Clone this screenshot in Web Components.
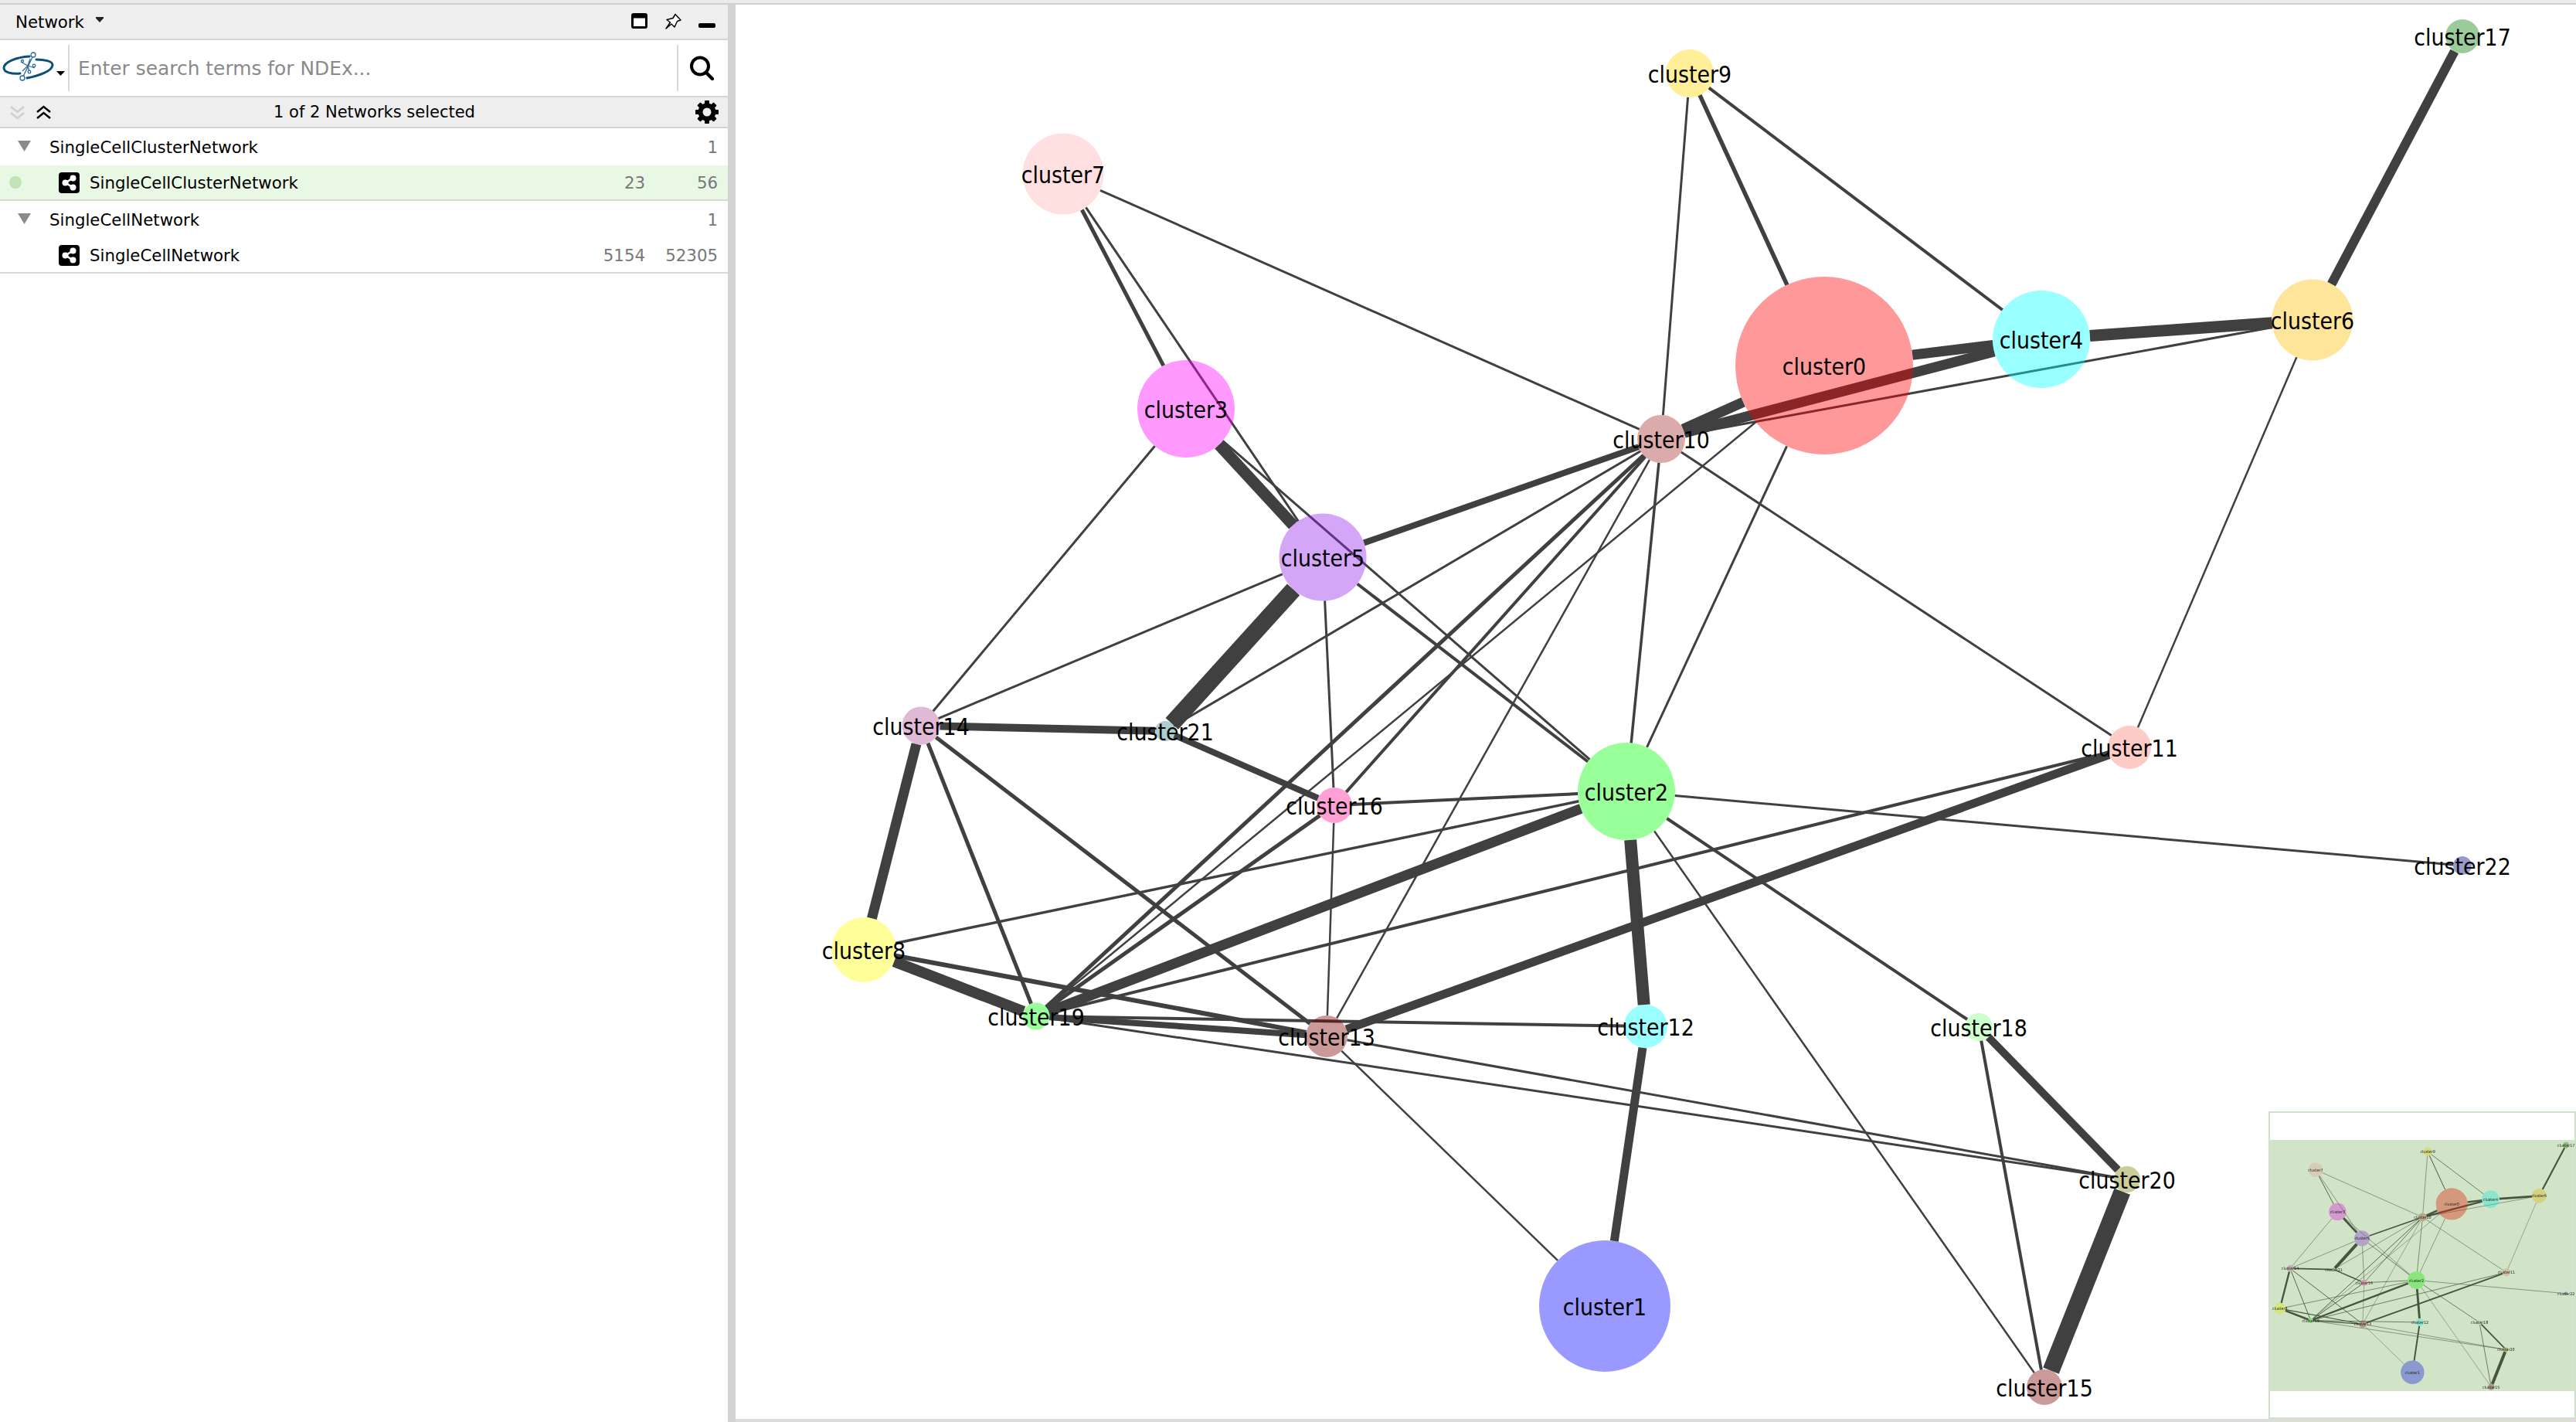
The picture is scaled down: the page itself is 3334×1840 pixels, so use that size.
<!DOCTYPE html>
<html>
<head>
<meta charset="utf-8">
<title>Network</title>
<style>
  html, body { margin: 0; padding: 0; background: #fff; overflow: hidden; }
  body { font-family: "DejaVu Sans", sans-serif; }
</style>
</head>
<body>
<cy-app>
  <network-panel slot="left">
    <panel-header>Network</panel-header>
    <search-bar>Enter search terms for NDEx...</search-bar>
    <selection-bar>1 of 2 Networks selected</selection-bar>
    <collection-row count="1">SingleCellClusterNetwork</collection-row>
    <network-row nodes="23" edges="56" selected>SingleCellClusterNetwork</network-row>
    <collection-row count="1">SingleCellNetwork</collection-row>
    <network-row nodes="5154" edges="52305">SingleCellNetwork</network-row>
  </network-panel>
  <network-canvas slot="right">
    <network-minimap></network-minimap>
  </network-canvas>
</cy-app>

<script>
// colours are the saturated ones, every node is painted at 0.4 opacity over the edges
const NODES = [
  [0, 2361, 473, 115, [255, 0, 0]],
  [1, 2077, 1690, 85, [0, 0, 255]],
  [2, 2105, 1024, 63, [0, 255, 0]],
  [3, 1535, 529, 63, [255, 0, 255]],
  [4, 2642, 439, 63, [0, 255, 255]],
  [5, 1712, 721, 56.5, [147, 32, 237]],
  [6, 2993, 414, 52.5, [255, 191, 0]],
  [7, 1376, 225, 52.5, [255, 175, 175]],
  [8, 1118, 1229, 42, [255, 255, 0]],
  [9, 2187, 95, 31, [255, 215, 0]],
  [10, 2150, 568, 31, [165, 42, 42]],
  [11, 2756, 967, 28, [250, 128, 114]],
  [12, 2130, 1328, 28, [0, 255, 255]],
  [13, 1717, 1341, 27, [128, 0, 0]],
  [14, 1192, 939, 24.5, [178, 79, 152]],
  [15, 2646, 1795, 23, [128, 0, 0]],
  [16, 1727, 1042, 23, [255, 20, 147]],
  [17, 3187, 47, 22, [0, 128, 0]],
  [18, 2561, 1329, 18, [128, 255, 128]],
  [19, 1341, 1315, 17.5, [0, 255, 0]],
  [20, 2753, 1526, 17, [128, 128, 0]],
  [21, 1508, 946, 13, [47, 133, 133]],
  [22, 3187, 1120, 12, [0, 0, 128]],
];

const EDGES = [
  [17, 6, 12], [9, 10, 3], [9, 0, 5.5], [9, 4, 4], [7, 10, 3], [7, 3, 5], [7, 5, 3],
  [3, 5, 15], [3, 14, 3], [3, 2, 3], [5, 21, 22], [5, 14, 3], [5, 16, 3], [5, 10, 8],
  [5, 2, 4], [10, 0, 13], [10, 4, 13], [10, 6, 3], [0, 4, 13], [4, 6, 15], [6, 11, 2.5],
  [10, 11, 3], [10, 2, 3.5], [0, 2, 3], [10, 21, 3], [0, 19, 2.5], [10, 19, 5], [10, 16, 4],
  [10, 13, 2.5], [16, 19, 5], [21, 14, 10], [21, 16, 8], [14, 8, 13], [14, 19, 5], [14, 13, 5],
  [8, 19, 14], [8, 13, 6], [8, 2, 3.5], [19, 12, 4], [19, 13, 8], [19, 20, 3], [13, 20, 3],
  [2, 19, 13], [19, 11, 4], [13, 11, 11], [13, 16, 2.5], [13, 1, 2.5], [2, 16, 4], [2, 22, 3],
  [2, 12, 16], [2, 18, 4], [2, 15, 2.5], [12, 1, 11], [18, 20, 10], [18, 15, 4], [20, 15, 22],
];

const rgb = c => `rgb(${c.map(Math.round).join(",")})`;

// the minimap shows the same drawing, under a pale green wash
const washed = c => [c[0] * 0.72 + 30, c[1] * 0.75 + 40, c[2] * 0.8 + 10];

// edges stop at the rim of their own two nodes
function graphMarkup(edgeColour, textColour, tint) {
  const byId = {};
  NODES.forEach(n => { byId[n[0]] = n; });
  const lines = EDGES.map(([a, b, w]) => {
    const p = byId[a], q = byId[b];
    const dx = q[1] - p[1], dy = q[2] - p[2];
    const len = Math.hypot(dx, dy);
    const ux = dx / len, uy = dy / len;
    const x1 = p[1] + ux * p[3], y1 = p[2] + uy * p[3];
    const x2 = q[1] - ux * q[3], y2 = q[2] - uy * q[3];
    return `<line x1="${x1}" y1="${y1}" x2="${x2}" y2="${y2}" stroke-width="${w}"/>`;
  }).join("");
  const circles = NODES.map(n =>
    `<circle cx="${n[1]}" cy="${n[2]}" r="${n[3]}" fill="${rgb(tint(n[4]))}" fill-opacity="0.4"/>`).join("");
  const labels = NODES.map(n =>
    `<text transform="translate(${n[1]} ${n[2] + 11.5}) scale(0.91 1)">cluster${n[0]}</text>`).join("");
  return `<g stroke="${edgeColour}" fill="none">${lines}</g><g>${circles}</g>
    <g font-family="'DejaVu Sans', sans-serif" font-size="29.5" text-anchor="middle" fill="${textColour}">${labels}</g>`;
}

class CyApp extends HTMLElement {
  constructor() {
    super();
    this.attachShadow({ mode: "open" });
    this.shadowRoot.innerHTML = `
    <style>
      :host { display: flex; flex-direction: column; width: 3334px; height: 1840px; }
      .top { height: 4px; background: #ececec; border-bottom: 2px solid #d0d0d0; flex: none; }
      .main { flex: 1; display: flex; min-height: 0; }
      .left { width: 942px; flex: none; display: flex; }
      .split { width: 10px; flex: none; background: #d3d3d3; }
      .right { flex: 1; min-width: 0; display: flex; }
    </style>
    <div class="top"></div>
    <div class="main">
      <div class="left"><slot name="left"></slot></div>
      <div class="split"></div>
      <div class="right"><slot name="right"></slot></div>
    </div>`;
  }
}

class NetworkPanel extends HTMLElement {
  constructor() {
    super();
    this.attachShadow({ mode: "open" });
    this.shadowRoot.innerHTML = `
    <style>
      :host { display: flex; flex-direction: column; width: 942px; background: #fff; }
    </style>
    <slot></slot>`;
  }
}

class PanelHeader extends HTMLElement {
  constructor() {
    super();
    this.attachShadow({ mode: "open" });
    this.shadowRoot.innerHTML = `
    <style>
      :host {
        display: flex; align-items: center; height: 44px; padding: 0 16px 0 20px;
        background: #eeeeee; border-bottom: 2px solid #d4d4d4;
        font: 21.3px "DejaVu Sans", sans-serif; color: #000;
      }
      .caret { margin-left: 15px; margin-top: -6px; }
      .tools { margin-left: auto; display: flex; align-items: flex-start; gap: 22px; }
      svg { display: block; }
    </style>
    <slot></slot>
    <svg class="caret" width="10" height="7" viewBox="0 0 10 7"><path d="M0 0h10v1.5L5 7 0 1.5z" fill="#222"/></svg>
    <div class="tools">
      <svg width="21" height="20" viewBox="0 0 21 20"><rect x="1.5" y="1.5" width="18" height="17" rx="1.5" fill="#fff" stroke="#000" stroke-width="3"/><rect x="1" y="1" width="19" height="5.5" fill="#000"/></svg>
      <svg width="22" height="22" viewBox="0 0 22 22"><path d="M14 1.500l7 7.500-4.500 1.500-3.500 7.500-4-4-7 6 5.500-8-4.500-3.500 8-2z" fill="#fff" stroke="#000" stroke-width="1.500" stroke-linejoin="round"/></svg>
      <svg width="22" height="20" viewBox="0 0 22 20"><rect x="0" y="13" width="22" height="6" rx="2" fill="#000"/></svg>
    </div>`;
  }
}

class SearchBar extends HTMLElement {
  constructor() {
    super();
    this.attachShadow({ mode: "open" });
    this.shadowRoot.innerHTML = `
    <style>
      :host {
        display: grid; grid-template-columns: 88px 2px 1fr 2px 64px; align-items: center;
        height: 72px; background: #fff; border-bottom: 2px solid #d4d4d4;
      }
      .logo { display: flex; align-items: center; padding-left: 2px; }
      .rule { background: #d8d8d8; height: 60px; }
      .text { padding-left: 11px; font: 24.9px "DejaVu Sans", sans-serif; color: #8a8a8a; }
      .find { display: flex; justify-content: center; padding-right: 4px; }
      svg { display: block; }
    </style>
    <div class="logo">
      <svg width="70" height="44" viewBox="0 0 70 44">
        <g fill="none" stroke="#0d4f7c" stroke-linecap="round">
          <path d="M36 7C20 8 3 14 3 22c0 6 11 8 21 7" stroke-width="3"/>
          <path d="M33 35c15-3 33-9 33-17 0-5-11-7-21-7" stroke-width="3"/>
        </g>
        <g fill="none" stroke="#2a6a94" stroke-width="1.300">
          <path d="M40 8 28 33M34 19l-9-5M34 19l9 3M34 19l-7 7M34 19l2 8M34 19l3-9"/>
        </g>
        <g fill="#fff" stroke="#2a6a94" stroke-width="1.300">
          <circle cx="41" cy="5" r="3"/><circle cx="27" cy="35" r="3"/>
          <circle cx="42" cy="19" r="1.800"/><circle cx="36" cy="27" r="1.800"/><circle cx="27" cy="13" r="1.500"/>
        </g>
      </svg>
      <svg width="11" height="6" viewBox="0 0 11 6" style="margin-top:14px;margin-left:1px"><path d="M0 0h11L5.500 6z" fill="#000"/></svg>
    </div>
    <div class="rule"></div>
    <div class="text"><slot></slot></div>
    <div class="rule"></div>
    <div class="find">
      <svg width="32" height="32" viewBox="0 0 32 32"><circle cx="14" cy="13.500" r="11" fill="none" stroke="#000" stroke-width="4"/><path d="M22 22l8 8" stroke="#000" stroke-width="4.500" stroke-linecap="round"/></svg>
    </div>`;
  }
}

class SelectionBar extends HTMLElement {
  constructor() {
    super();
    this.attachShadow({ mode: "open" });
    // gear teeth are rotated copies of one rectangle
    const teeth = [0, 45, 90, 135].map(a =>
      `<rect x="12" y="0" width="6" height="30" rx="1" transform="rotate(${a} 15 15)"/>`).join("");
    this.shadowRoot.innerHTML = `
    <style>
      :host {
        display: grid; grid-template-columns: 354px 1fr auto; align-items: center;
        height: 38px; background: #eeeeee; border-bottom: 2px solid #d4d4d4;
        font: 21px "DejaVu Sans", sans-serif; color: #000;
      }
      .arrows { display: flex; gap: 15px; padding-left: 13px; }
      .gear { padding-right: 12px; }
      svg { display: block; }
    </style>
    <div class="arrows">
      <svg width="19" height="19" viewBox="0 0 19 19"><path d="M1 2l8.500 7L18 2M1 10l8.500 7 8.500-7" fill="none" stroke="#cfcfcf" stroke-width="2.500"/></svg>
      <svg width="19" height="19" viewBox="0 0 19 19"><path d="M1 9l8.500-7L18 9M1 17l8.500-7 8.500 7" fill="none" stroke="#000" stroke-width="2.500"/></svg>
    </div>
    <div><slot></slot></div>
    <div class="gear">
      <svg width="30" height="30" viewBox="0 0 30 30"><g fill="#000">${teeth}<circle cx="15" cy="15" r="11.500"/></g><circle cx="15" cy="15" r="5.500" fill="#eeeeee"/></svg>
    </div>`;
  }
}

class CollectionRow extends HTMLElement {
  constructor() {
    super();
    this.attachShadow({ mode: "open" });
  }

  connectedCallback() {
    this.shadowRoot.innerHTML = `
    <style>
      :host {
        display: flex; align-items: center; height: 48px; padding: 0 13px 0 23px;
        background: #fff; font: 21.3px "DejaVu Sans", sans-serif; color: #000;
      }
      svg { display: block; margin-right: 24px; margin-top: -2px; }
      .count { margin-left: auto; color: #777; }
    </style>
    <svg width="17" height="14" viewBox="0 0 17 14"><path d="M0 0h17L8.500 14z" fill="#8a8a8a"/></svg>
    <slot></slot>
    <span class="count">${this.getAttribute("count")}</span>`;
  }
}

class NetworkRow extends HTMLElement {
  constructor() {
    super();
    this.attachShadow({ mode: "open" });
  }

  connectedCallback() {
    const selected = this.hasAttribute("selected");
    this.shadowRoot.innerHTML = `
    <style>
      :host {
        display: grid; grid-template-columns: 76px 27px 1fr 100px 94px; align-items: center;
        height: 44px; padding-right: 13px; border-bottom: 2px solid #d8d8d8;
        background: ${selected ? "#e9f7e5" : "#fff"};
        font: 21.3px "DejaVu Sans", sans-serif; color: #000;
      }
      .dot { width: 16px; height: 16px; margin-left: 12px; border-radius: 50%; background: ${selected ? "#c0e4b8" : "transparent"}; }
      .name { padding-left: 13px; }
      .num { text-align: right; color: #777; }
      svg { display: block; }
    </style>
    <div class="dot"></div>
    <svg width="27" height="27" viewBox="0 0 27 27">
      <rect width="27" height="27" rx="4" fill="#000"/>
      <path d="M18 7.500 9 13.500 18 19.500" fill="none" stroke="#fff" stroke-width="2.600"/>
      <circle cx="18.500" cy="7.500" r="4" fill="#fff"/><circle cx="8.500" cy="13.500" r="4" fill="#fff"/><circle cx="18.500" cy="19.500" r="4" fill="#fff"/>
    </svg>
    <div class="name"><slot></slot></div>
    <div class="num">${this.getAttribute("nodes")}</div>
    <div class="num">${this.getAttribute("edges")}</div>`;
  }
}

class NetworkCanvas extends HTMLElement {
  constructor() {
    super();
    this.attachShadow({ mode: "open" });
    this.shadowRoot.innerHTML = `
    <style>
      :host {
        display: block; position: relative; flex: 1; height: 1834px;
        background: #fff; overflow: hidden;
      }
      svg { display: block; width: 2382px; height: 1830px; }
      .foot { height: 4px; background: #dcdcdc; }
    </style>
    <svg viewBox="952 6 2382 1830">${graphMarkup("#404040", "#000", c => c)}</svg>
    <div class="foot"></div>
    <slot></slot>`;
  }
}

class NetworkMinimap extends HTMLElement {
  constructor() {
    super();
    this.attachShadow({ mode: "open" });
    this.shadowRoot.innerHTML = `
    <style>
      :host {
        position: absolute; right: 0; bottom: 4px; width: 394px; height: 394px;
        display: flex; align-items: center; background: #fff; border: 2px solid #cfe2c9;
      }
      svg { display: block; width: 394px; height: 325px; filter: blur(0.45px); }
    </style>
    <svg viewBox="1047 9.500 2201 1816">
      <rect x="1047" y="9.500" width="2201" height="1816" fill="#d2e4c8"/>
      ${graphMarkup("#46553f", "#222", washed)}
    </svg>`;
  }
}

customElements.define("cy-app", CyApp);
customElements.define("network-panel", NetworkPanel);
customElements.define("panel-header", PanelHeader);
customElements.define("search-bar", SearchBar);
customElements.define("selection-bar", SelectionBar);
customElements.define("collection-row", CollectionRow);
customElements.define("network-row", NetworkRow);
customElements.define("network-canvas", NetworkCanvas);
customElements.define("network-minimap", NetworkMinimap);
</script>
</body>
</html>
